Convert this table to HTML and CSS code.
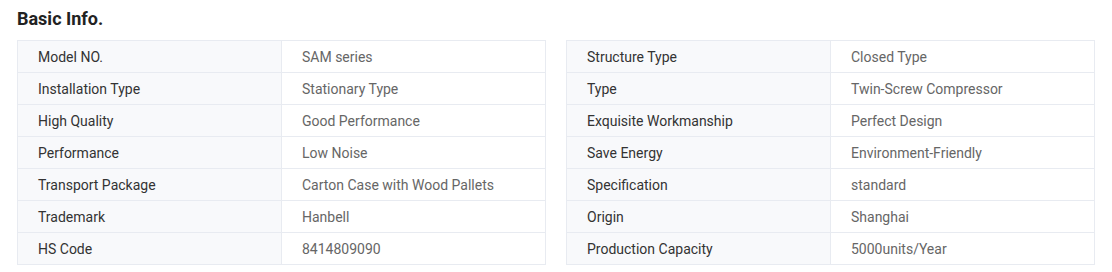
FILE: index.html
```html
<!DOCTYPE html>
<html>
<head>
<meta charset="utf-8">
<link rel="stylesheet" href="styles.css">
</head>
<body>
<div class="wrap">
  <h2 class="title">Basic Info.</h2>
  <div class="tables">
    <table class="info">
      <tr><th>Model NO.</th><td>SAM series</td></tr>
      <tr><th>Installation Type</th><td>Stationary Type</td></tr>
      <tr><th>High Quality</th><td>Good Performance</td></tr>
      <tr><th>Performance</th><td>Low Noise</td></tr>
      <tr><th>Transport Package</th><td>Carton Case with Wood Pallets</td></tr>
      <tr><th>Trademark</th><td>Hanbell</td></tr>
      <tr><th>HS Code</th><td>8414809090</td></tr>
    </table>
    <table class="info">
      <tr><th>Structure Type</th><td>Closed Type</td></tr>
      <tr><th>Type</th><td>Twin-Screw Compressor</td></tr>
      <tr><th>Exquisite Workmanship</th><td>Perfect Design</td></tr>
      <tr><th>Save Energy</th><td>Environment-Friendly</td></tr>
      <tr><th>Specification</th><td>standard</td></tr>
      <tr><th>Origin</th><td>Shanghai</td></tr>
      <tr><th>Production Capacity</th><td>5000units/Year</td></tr>
    </table>
  </div>
</div>
</body>
</html>
```
FILE: styles.css
```css
html, body {
  margin: 0;
  padding: 0;
  background: #fff;
}
body {
  font-family: Roboto, "Liberation Sans", sans-serif;
}
.wrap {
  padding: 7px 17px 0 17px;
}
.title {
  margin: 0;
  font-size: 18px;
  font-weight: 700;
  line-height: 24px;
  color: #222;
}
.tables {
  margin-top: 9px;
  display: grid;
  grid-template-columns: 1fr 1fr;
  gap: 20px;
}
.info {
  width: 100%;
  border-collapse: collapse;
  table-layout: fixed;
  font-size: 14px;
}
.info th, .info td {
  border: 1px solid #e8ebf1;
  height: 31px;
  padding: 1px 0 0 20px;
  box-sizing: border-box;
  text-align: left;
  font-weight: 400;
  line-height: 30px;
}
.info th {
  background: #f8f9fb;
  color: #333;
}
.info td {
  color: #666;
  background: #fff;
}
```
